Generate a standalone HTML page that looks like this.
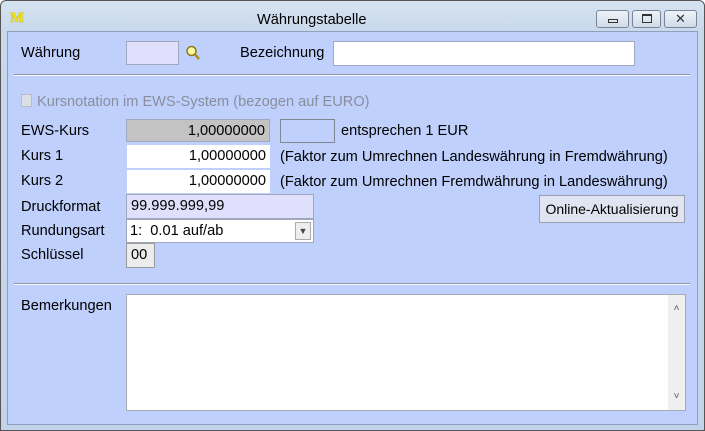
<!DOCTYPE html>
<html><head><meta charset="utf-8"><style>
*{margin:0;padding:0;box-sizing:border-box}
body{width:705px;height:431px;overflow:hidden;font-family:"Liberation Sans",Arial,sans-serif;font-size:14.6px;color:#000;background:#fff}
.win{position:absolute;left:0;top:0;width:705px;height:431px;border:1px solid #555;border-radius:6px 6px 0 0;background:linear-gradient(#d6e3f1,#c9d9ec 30px,#c3d4ea);}
.client{position:absolute;left:7px;top:31px;width:691px;height:394px;background:#bfd0fd;border:1px solid #8e9fbf}
.a{position:absolute;white-space:nowrap}
.l{margin-top:1px}
.in{position:absolute;border:1px solid #a0a8c0;background:#fff;padding:0 4px;line-height:23px}
.sep{position:absolute;left:14px;width:676px;height:2px;border-top:1px solid #8f97a8;border-bottom:1px solid #f4f6fb}
.tb{position:absolute;top:9px;height:18px;border:1px solid #7a8596;border-radius:3px;background:linear-gradient(#eef3f9,#cfdbe9)}
</style></head><body>
<div class="win">
<div class="a" style="left:9px;top:9px;font-family:'Liberation Serif',serif;font-weight:bold;font-size:15px;color:#f5e600;text-shadow:0 0 1px #887700">M</div>
<div class="a" style="left:256px;top:11px;font-size:14.6px">Währungstabelle</div>
<div class="tb" style="left:595px;width:33px"><div style="position:absolute;left:11px;top:8px;width:10px;height:4px;border:1px solid #333"></div></div>
<div class="tb" style="left:631px;width:29px"><div style="position:absolute;left:9px;top:3px;width:10px;height:9px;border:1px solid #333;border-top-width:2px"></div></div>
<div class="tb" style="left:663px;width:33px;text-align:center;line-height:15px;font-size:13px;color:#333">✕</div>
</div>
<div class="client"></div>
<div class="a l" style="left:21px;top:44px">Währung</div>
<div class="in" style="left:126px;top:41px;width:53px;height:24px;background:#e0e0fc"></div>
<svg class="a" style="left:185px;top:44px" width="16" height="18" viewBox="0 0 16 18"><circle cx="6.5" cy="7" r="4.5" fill="#fff8a0" stroke="#8a7a10" stroke-width="1.5"/><line x1="10" y1="10.5" x2="14" y2="15" stroke="#b09020" stroke-width="2.5"/></svg>
<div class="a l" style="left:240px;top:44px">Bezeichnung</div>
<div class="in" style="left:333px;top:41px;width:302px;height:25px"></div>
<div class="sep" style="top:74px"></div>
<div class="a" style="left:21px;top:94px;width:11px;height:13px;border:1px solid #b8bcc6;background:#dcdfe6"></div>
<div class="a l" style="left:37px;top:93px;color:#8a8e9c">Kursnotation im EWS-System (bezogen auf EURO)</div>
<div class="a l" style="left:21px;top:122px">EWS-Kurs</div>
<div class="in" style="left:126px;top:119px;width:144px;height:23px;background:#c3c3c3;text-align:right">1,00000000</div>
<div class="in" style="left:280px;top:119px;width:55px;height:24px;border-color:#808890;background:#bfd0fd"></div>
<div class="a l" style="left:341px;top:122px">entsprechen 1 EUR</div>
<div class="a l" style="left:21px;top:147px">Kurs 1</div>
<div class="in" style="left:126px;top:144px;width:145px;height:25px;border-color:#bfd0fd;text-align:right">1,00000000</div>
<div class="a l" style="left:280px;top:148px">(Faktor zum Umrechnen Landeswährung in Fremdwährung)</div>
<div class="a l" style="left:21px;top:172px">Kurs 2</div>
<div class="in" style="left:126px;top:169px;width:145px;height:25px;border-color:#bfd0fd;text-align:right">1,00000000</div>
<div class="a l" style="left:280px;top:173px">(Faktor zum Umrechnen Fremdwährung in Landeswährung)</div>
<div class="a l" style="left:21px;top:198px">Druckformat</div>
<div class="in" style="left:126px;top:194px;width:188px;height:25px;background:#e0e0fc">99.999.999,99</div>
<div class="a l" style="left:21px;top:222px">Rundungsart</div>
<div class="in" style="left:126px;top:219px;width:188px;height:24px;padding-left:3px">1:&nbsp; 0.01 auf/ab
<div style="position:absolute;right:2px;top:2px;width:16px;height:18px;border:1px solid #aaa;background:#eee;font-size:9px;line-height:16px;text-align:center;color:#444">▼</div></div>
<div class="a l" style="left:21px;top:246px">Schlüssel</div>
<div class="in" style="left:126px;top:243px;width:29px;height:25px;background:#ececec;border-color:#999">00</div>
<div class="a" style="left:539px;top:195px;width:146px;height:28px;border:1px solid #9aa0ae;background:#dfe4f0;text-align:center;line-height:26px;font-size:14px">Online-Aktualisierung</div>
<div class="sep" style="top:283px"></div>
<div class="a l" style="left:21px;top:297px">Bemerkungen</div>
<div class="in" style="left:126px;top:294px;width:560px;height:117px;border-color:#a8aab4">
<div style="position:absolute;right:0;top:0;width:17px;height:115px;background:#efefef;font-size:10px;color:#555;text-align:center"><div style="margin-top:2px">˄</div><div style="position:absolute;bottom:2px;width:17px">˅</div></div></div>
</body></html>
